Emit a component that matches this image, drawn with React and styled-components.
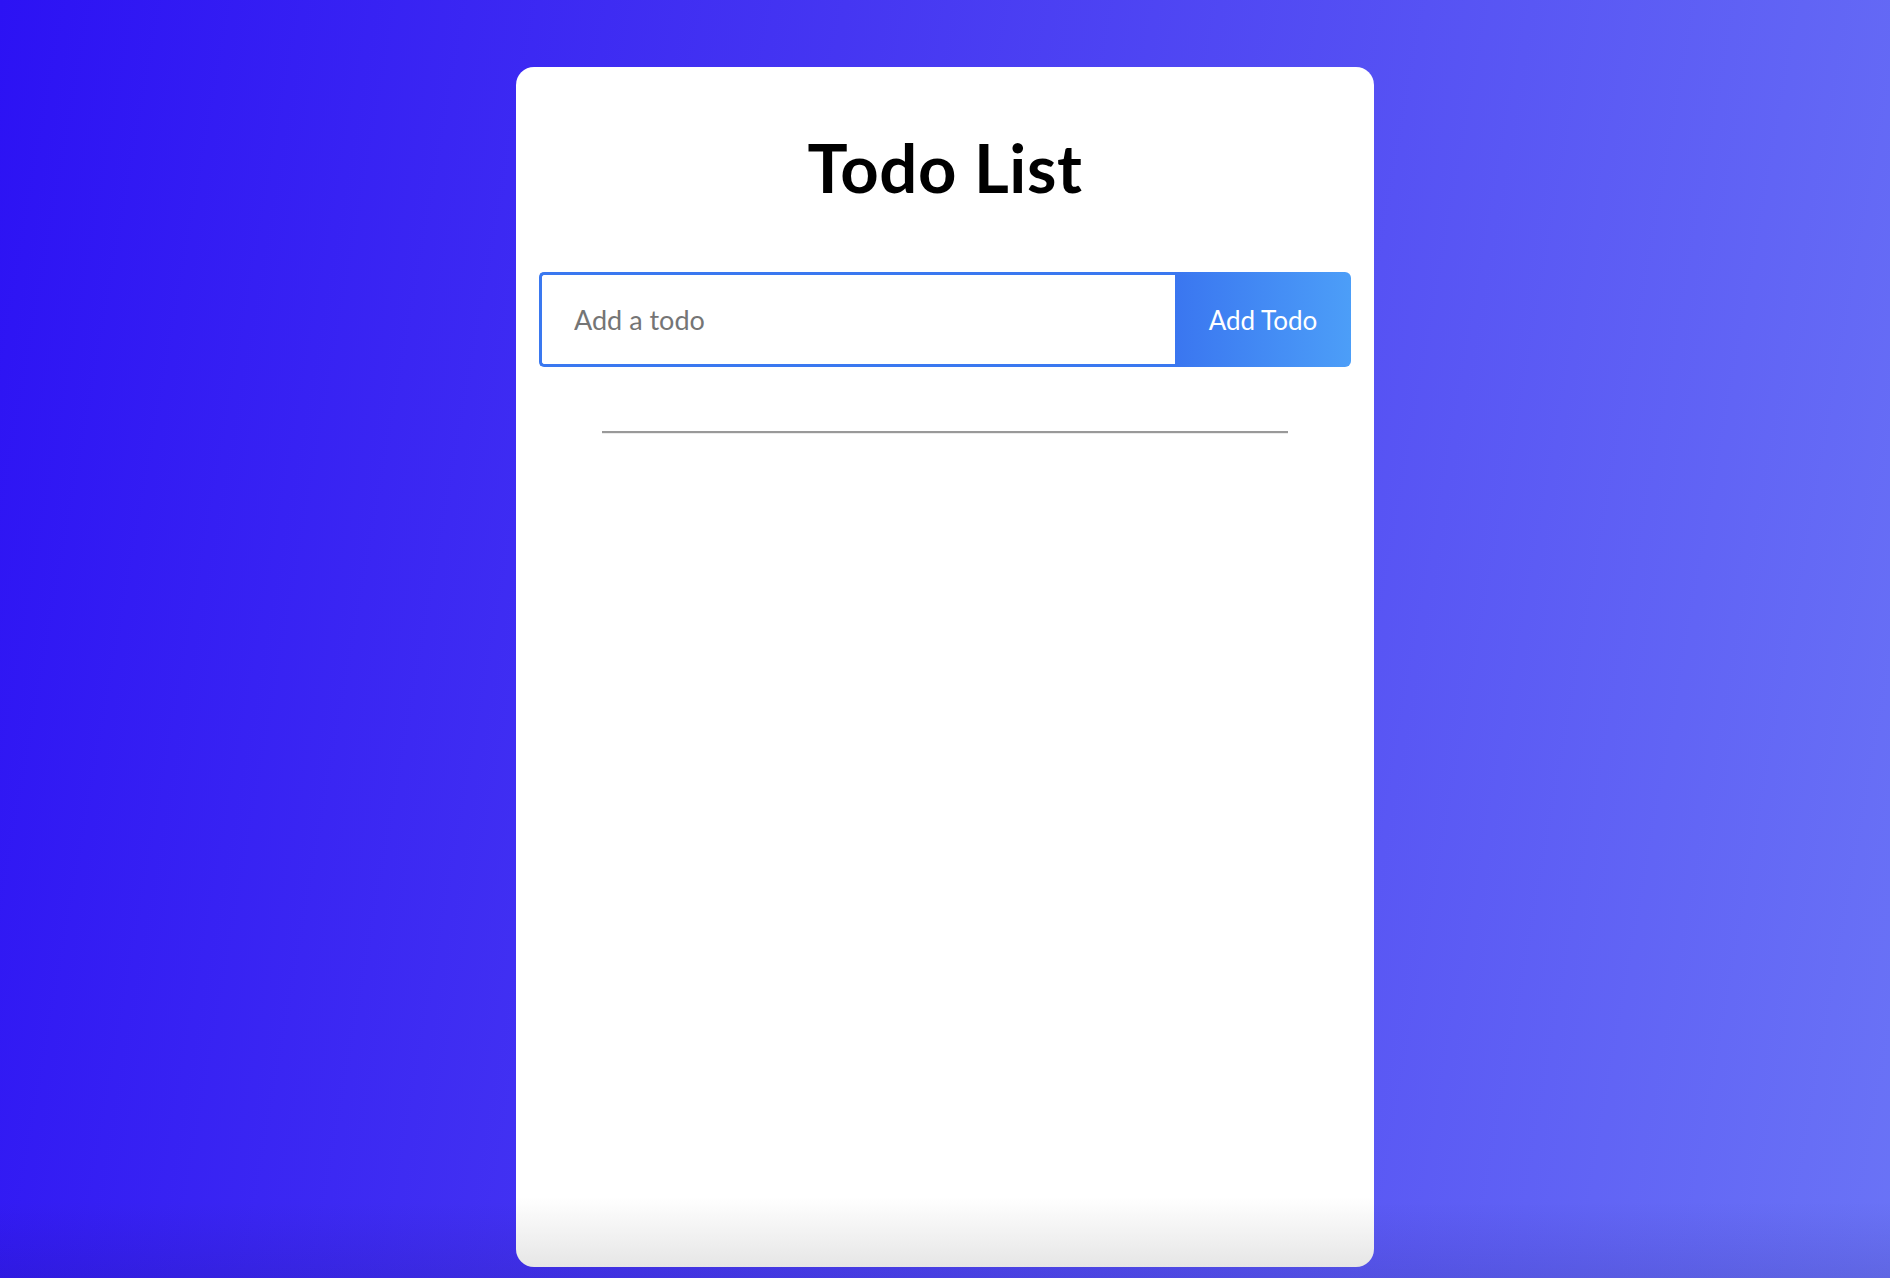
import React, { useState } from 'react'
import styled, { createGlobalStyle } from 'styled-components'

const GlobalStyle = createGlobalStyle`
  html, body {
    margin: 0;
    padding: 0;
  }
  body {
    font-family: Lato, "Open Sans", "DejaVu Sans", sans-serif;
    min-height: 100vh;
    background:
      linear-gradient(to bottom, rgba(0, 0, 0, 0) 94%, rgba(20, 10, 90, 0.12) 100%),
      linear-gradient(100deg, #2c12f4 0%, #4536f2 40%, #6a73f6 100%);
    background-attachment: fixed;
    overflow: hidden;
  }
`

const Page = styled.div`
  display: flex;
  justify-content: center;
  padding-top: 67px;
  min-height: 100vh;
  box-sizing: border-box;
`

const Card = styled.div`
  width: 858px;
  height: 1200px;
  box-sizing: border-box;
  border-radius: 18px;
  background: linear-gradient(to bottom, #ffffff calc(100% - 70px), #e6e6e6 100%);
  display: flex;
  flex-direction: column;
`

const Title = styled.h1`
  margin: 61px 0 0;
  text-align: center;
  font-size: 67px;
  line-height: 78px;
  letter-spacing: 0.6px;
  font-weight: 700;
  color: #000;
`

const Form = styled.form`
  display: flex;
  margin: 66px 23px 0;
  height: 95px;
`

const Input = styled.input`
  flex: 1;
  min-width: 0;
  box-sizing: border-box;
  height: 100%;
  border: 3px solid #3a78f0;
  border-right: none;
  border-radius: 5px 0 0 5px;
  padding: 0 0 0 32px;
  font-family: inherit;
  font-size: 27px;
  color: #222;
  outline: none;
  &::placeholder {
    color: #757575;
  }
`

const Button = styled.button`
  width: 176px;
  height: 100%;
  border: none;
  border-radius: 0 6px 6px 0;
  background: linear-gradient(to right, #3a76f0, #4c9ef8);
  color: #fff;
  font-family: inherit;
  font-size: 26px;
  cursor: pointer;
`

const Divider = styled.hr`
  width: 80%;
  margin: 64px auto 0;
  border: none;
  border-top: 2px solid #999999;
  border-bottom: 1px solid #ececec;
  height: 0;
`

const List = styled.ul`
  list-style: none;
  margin: 0;
  padding: 0;
`

const App = () => {
  const [text, setText] = useState('')
  const [todos, setTodos] = useState([])

  const addTodo = e => {
    e.preventDefault()
    if (text.trim() === '') return
    setTodos([...todos, { id: Date.now(), text }])
    setText('')
  }

  return (
    <Page>
      <GlobalStyle />
      <Card>
        <Title>Todo List</Title>
        <Form onSubmit={addTodo}>
          <Input
            placeholder="Add a todo"
            value={text}
            onChange={e => setText(e.target.value)}
          />
          <Button type="submit">Add Todo</Button>
        </Form>
        <Divider />
        <List>
          {todos.map(todo => <li key={todo.id}>{todo.text}</li>)}
        </List>
      </Card>
    </Page>
  )
}

export default App
